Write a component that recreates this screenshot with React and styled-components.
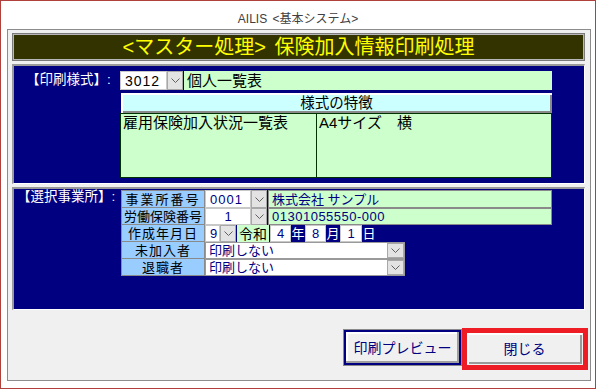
import React from "react";
import styled, { createGlobalStyle } from "styled-components";

const GlobalStyle = createGlobalStyle`
  body {
    margin: 0;
    background: #ffffff;
    font-family: "Liberation Sans", "Noto Sans CJK JP", sans-serif;
  }
`;

const Chevron = () => (
  <svg width="9" height="5" viewBox="0 0 9 5">
    <polyline points="0.5,0.5 4.5,4.5 8.5,0.5" fill="none" stroke="#606060" strokeWidth="1" />
  </svg>
);

const App = () => {
  return (
    <>
      <GlobalStyle />
      <Window>
        <Caption>AILIS &lt;基本システム&gt;</Caption>
        <Frame>
          <TitleBar>&lt;マスター処理&gt; 保険加入情報印刷処理</TitleBar>

          <Panel $h={120}>
            <SideLabel $pl={12} $pt={6}>【印刷様式】:</SideLabel>
            <Content $pt={5}>
              <FieldRow $h={19}>
                <ValueBox $w={47} $size={14} $color="#000" $ls={1}>3012</ValueBox>
                <DropBtn><Chevron /></DropBtn>
                <GreenField $size={15} $color="#000">個人一覧表</GreenField>
              </FieldRow>
              <FeatureHeader>様式の特徴</FeatureHeader>
              <FeatureBody>
                <FeatureCell>雇用保険加入状況一覧表</FeatureCell>
                <FeatureCell $divider>A4サイズ　横</FeatureCell>
              </FeatureBody>
            </Content>
          </Panel>

          <Panel $h={123}>
            <SideLabel $pl={3} $pt={0}>【選択事業所】:</SideLabel>
            <Content $pt={1}>
              <GridRow $h={18}>
                <HeadCell $ls={2}>事業所番号</HeadCell>
                <ValueBox $w={46} $ls={1}>0001</ValueBox>
                <DropBtn><Chevron /></DropBtn>
                <GreenField $bordered>株式会社 サンプル</GreenField>
              </GridRow>
              <GridRow $h={17}>
                <HeadCell>労働保険番号</HeadCell>
                <ValueBox $w={46} $center>1</ValueBox>
                <DropBtn><Chevron /></DropBtn>
                <GreenField $bordered $ls={0.5}>01301055550-000</GreenField>
              </GridRow>
              <GridRow $h={17}>
                <HeadCell $ls={1}>作成年月日</HeadCell>
                <ValueBox $w={15}>9</ValueBox>
                <DropBtn><Chevron /></DropBtn>
                <GreenField $w={32} $size={14} $color="#000" $center>令和</GreenField>
                <ValueBox $w={21} $center $ml={1}>4</ValueBox>
                <DateUnit>年</DateUnit>
                <ValueBox $w={21} $center>8</ValueBox>
                <DateUnit>月</DateUnit>
                <ValueBox $w={22} $center>1</ValueBox>
                <DateUnit>日</DateUnit>
              </GridRow>
              <GridRow $h={17}>
                <HeadCell $ls={1}>未加入者</HeadCell>
                <SelectBox>
                  <SelectText>印刷しない</SelectText>
                  <DropBtn $w={17}><Chevron /></DropBtn>
                </SelectBox>
              </GridRow>
              <GridRow $h={17}>
                <HeadCell $ls={1}>退職者</HeadCell>
                <SelectBox>
                  <SelectText>印刷しない</SelectText>
                  <DropBtn $w={17}><Chevron /></DropBtn>
                </SelectBox>
              </GridRow>
            </Content>
          </Panel>

          <ButtonBar>
            <PreviewButton>印刷プレビュー</PreviewButton>
            <Highlight>
              <CloseButton>閉じる</CloseButton>
            </Highlight>
          </ButtonBar>
        </Frame>
      </Window>
    </>
  );
};

export default App;

// Styled Components
const Window = styled.div`
  width: 596px;
  height: 389px;
  box-sizing: border-box;
  border: 1px solid #b0403c;
  background: #ffffff;
  display: flex;
  flex-direction: column;
`;

const Caption = styled.div`
  height: 28px;
  display: flex;
  align-items: center;
  justify-content: center;
  font-size: 12px;
  color: #404040;
  padding-top: 4px;
  box-sizing: border-box;
  word-spacing: 2px;
`;

const Frame = styled.div`
  margin: 0 4px 0 6px;
  height: 352px;
  box-sizing: border-box;
  border: 1px solid #8c8c8c;
  background: #f0f0f0;
  padding: 3px 5px 0 4px;
  display: flex;
  flex-direction: column;
`;

const TitleBar = styled.div`
  height: 28px;
  box-sizing: border-box;
  border: 1px solid #7a7a7a;
  box-shadow: inset 0 0 0 1px #b8b8b8;
  background: #333300;
  color: #ffff00;
  font-size: 20px;
  line-height: 1;
  display: flex;
  align-items: center;
  justify-content: center;
  word-spacing: 3px;
`;

const Panel = styled.div`
  margin-top: 3px;
  height: ${(p) => p.$h}px;
  box-sizing: border-box;
  border-top: 2px solid #9a9a9a;
  border-left: 2px solid #9a9a9a;
  border-right: 1px solid #ffffff;
  border-bottom: 1px solid #ffffff;
  background: #000080;
  display: flex;
`;

const SideLabel = styled.div`
  width: 106px;
  flex-shrink: 0;
  box-sizing: border-box;
  padding-left: ${(p) => p.$pl}px;
  padding-top: ${(p) => p.$pt}px;
  color: #ffffff;
  font-size: 13.5px;
  line-height: 16px;
  white-space: nowrap;
`;

const Content = styled.div`
  width: 432px;
  padding-top: ${(p) => p.$pt}px;
  display: flex;
  flex-direction: column;
`;

const FieldRow = styled.div`
  height: ${(p) => p.$h}px;
  display: flex;
`;

const GridRow = styled.div`
  height: ${(p) => p.$h}px;
  display: flex;
  margin-left: 1px;
`;

const ValueBox = styled.div`
  width: ${(p) => p.$w}px;
  margin-left: ${(p) => p.$ml || 0}px;
  flex-shrink: 0;
  box-sizing: border-box;
  background: #ffffff;
  border: 1px solid #c8c8c8;
  color: ${(p) => p.$color || "#000080"};
  font-size: ${(p) => p.$size || 13}px;
  letter-spacing: ${(p) => p.$ls || 0}px;
  line-height: 1;
  display: flex;
  align-items: center;
  justify-content: ${(p) => (p.$center ? "center" : "flex-start")};
  padding-left: ${(p) => (p.$center ? 0 : 4)}px;
  overflow: hidden;
`;

const DropBtn = styled.div`
  width: ${(p) => p.$w || 16}px;
  flex-shrink: 0;
  box-sizing: border-box;
  background: #e3e3e3;
  border: 1px solid #a8a8a8;
  display: flex;
  align-items: center;
  justify-content: center;
`;

const GreenField = styled.div`
  flex: ${(p) => (p.$w ? "none" : 1)};
  width: ${(p) => (p.$w ? `${p.$w}px` : "auto")};
  margin-left: 1px;
  box-sizing: border-box;
  background: #ccffcc;
  border: ${(p) => (p.$bordered ? "1px solid #8a8a8a" : "none")};
  color: ${(p) => p.$color || "#000080"};
  font-size: ${(p) => p.$size || 13}px;
  letter-spacing: ${(p) => p.$ls || 0}px;
  line-height: 1;
  display: flex;
  align-items: center;
  justify-content: ${(p) => (p.$center ? "center" : "flex-start")};
  padding-left: ${(p) => (p.$center ? 0 : 3)}px;
  white-space: nowrap;
`;

const FeatureHeader = styled.div`
  margin: 3px 0 0 1px;
  height: 20px;
  box-sizing: border-box;
  background: #ccffff;
  box-shadow: inset 2px 2px 0 #ffffff, inset -2px -2px 0 #8a8a8a;
  color: #000;
  font-size: 14.5px;
  line-height: 1;
  display: flex;
  align-items: center;
  justify-content: center;
`;

const FeatureBody = styled.div`
  height: 65px;
  box-sizing: border-box;
  border: 1px solid #003300;
  background: #ccffcc;
  display: grid;
  grid-template-columns: 195px 1fr;
`;

const FeatureCell = styled.div`
  border-left: ${(p) => (p.$divider ? "1px solid #003300" : "none")};
  padding: 0 2px;
  color: #000;
  font-size: 15px;
  line-height: 17px;
  white-space: nowrap;
`;

const HeadCell = styled.div`
  width: 84px;
  flex-shrink: 0;
  box-sizing: border-box;
  background: #99ccff;
  border: 1px solid #8a8a8a;
  border-top-width: 0;
  color: #000;
  font-size: 13px;
  letter-spacing: ${(p) => p.$ls || 0}px;
  line-height: 1;
  display: flex;
  align-items: center;
  justify-content: center;
  ${GridRow}:first-child & {
    border-top-width: 1px;
  }
`;

const DateUnit = styled.div`
  width: 14px;
  flex-shrink: 0;
  color: #ffffff;
  font-size: 13px;
  line-height: 1;
  display: flex;
  align-items: center;
  justify-content: center;
`;

const SelectBox = styled.div`
  width: 200px;
  flex-shrink: 0;
  box-sizing: border-box;
  border: 1px solid #9a9a9a;
  background: #ffffff;
  display: flex;
`;

const SelectText = styled.div`
  flex: 1;
  color: #000080;
  font-size: 13px;
  line-height: 1;
  display: flex;
  align-items: center;
  padding-left: 3px;
`;

const ButtonBar = styled.div`
  flex: 1;
  display: flex;
  justify-content: flex-end;
  align-items: flex-start;
  padding-top: 18px;
  margin-right: -3px;
`;

const PreviewButton = styled.div`
  margin-top: 1px;
  width: 119px;
  height: 37px;
  box-sizing: border-box;
  border: 1px solid #8a8a8a;
  background: #f0f0f0;
  box-shadow: inset 0 0 0 2px #000080, inset -4px -4px 0 #a0a0a0, inset 4px 4px 0 #ffffff;
  color: #000080;
  font-size: 14px;
  line-height: 1;
  display: flex;
  align-items: center;
  justify-content: center;
`;

const Highlight = styled.div`
  width: 126px;
  height: 42px;
  box-sizing: border-box;
  border: 5px solid #ee1c24;
  padding: 0 1px 1px 0;
  background: #f0f0f0;
  display: flex;
`;

const CloseButton = styled.div`
  flex: 1;
  box-sizing: border-box;
  background: #f0f0f0;
  box-shadow: inset 2px 2px 0 #ffffff, inset -2px -2px 0 #9a9a9a;
  color: #000080;
  font-size: 14px;
  line-height: 1;
  display: flex;
  align-items: center;
  justify-content: center;
`;
